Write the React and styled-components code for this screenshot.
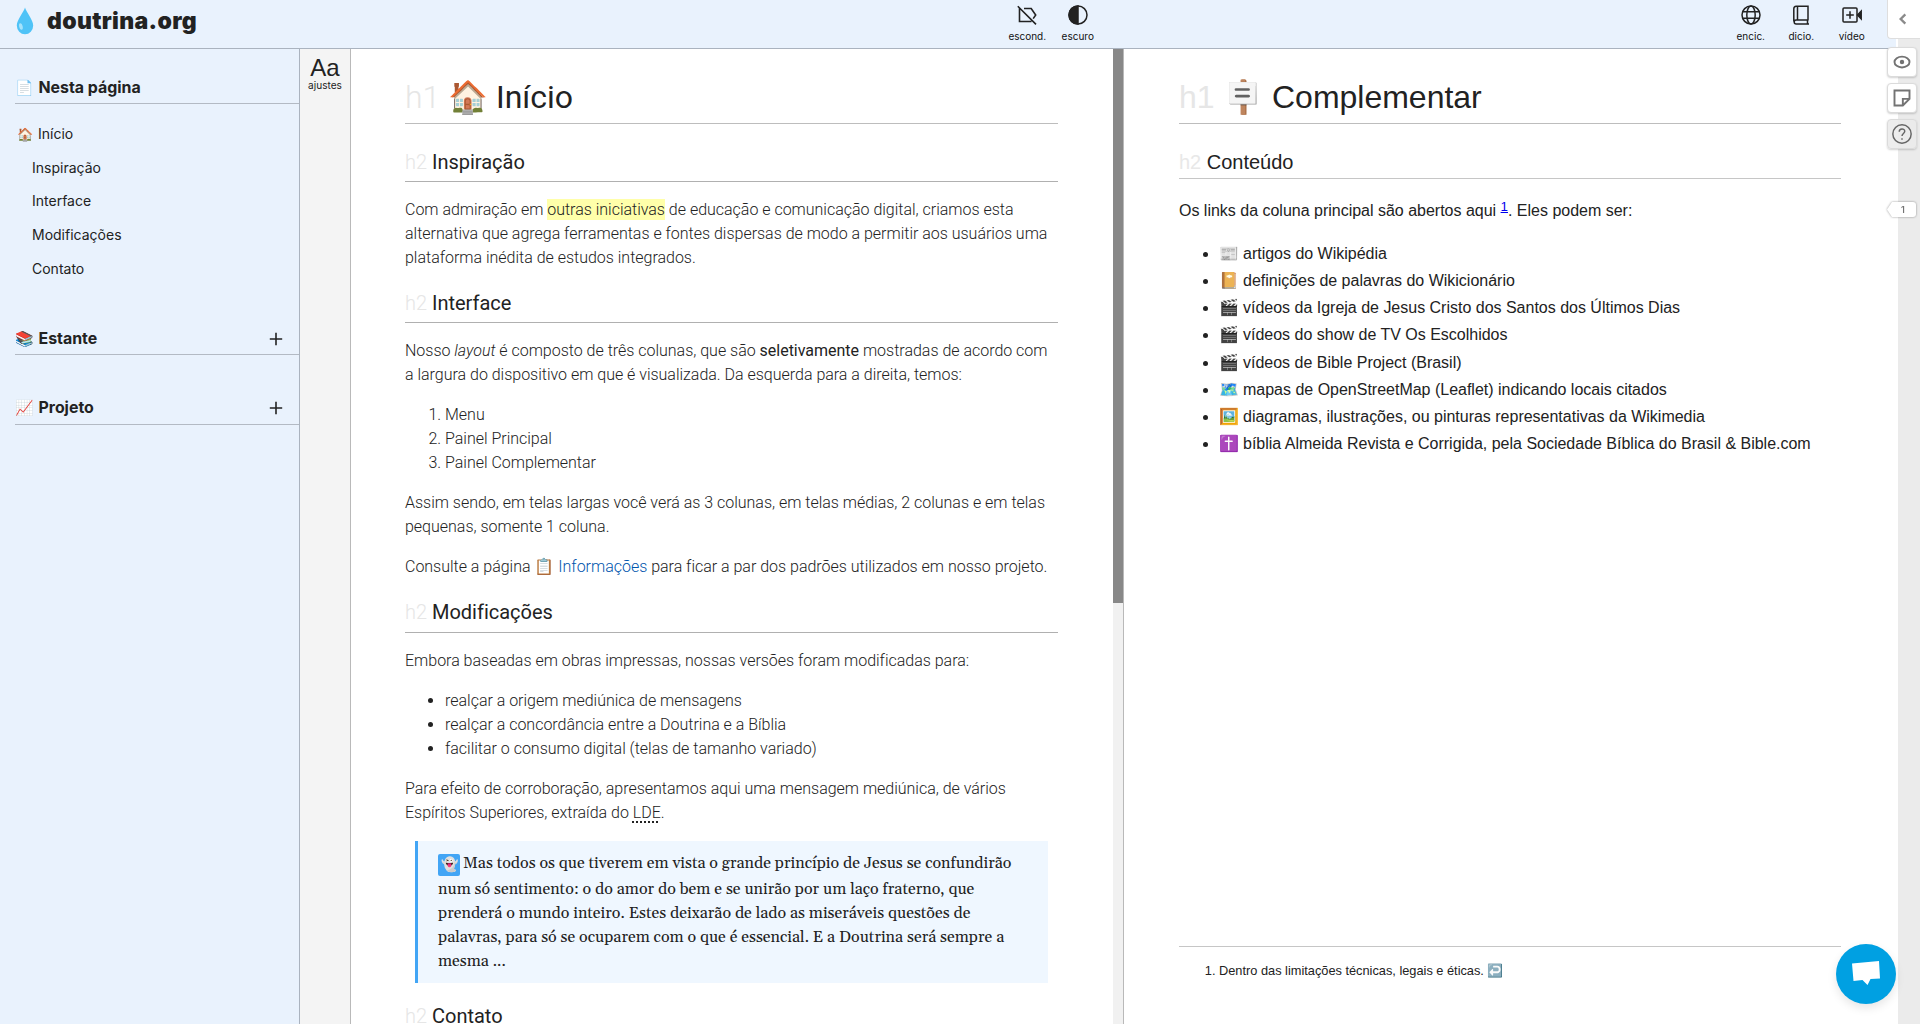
import React from "react";
import styled, { createGlobalStyle } from "styled-components";

const Global = createGlobalStyle`
  * { box-sizing: border-box; }
  html, body { margin: 0; height: 100%; overflow: hidden; background: #fff; }
  body { font-family: Inter, sans-serif; color: #222; }
  a { color: inherit; text-decoration: none; }
`;

const Page = styled.div`
  position: relative;
  display: flex;
  flex-direction: column;
  width: 1920px;
  height: 1024px;
  overflow: hidden;
`;
const Header = styled.header`
  display: flex;
  flex: none;
  width: 1896px;
  height: 49px;
  background: #e9f2fd;
  border-bottom: 1px solid #aab3bf;
`;
const Brand = styled.div`
  display: flex;
  align-items: flex-start;
  width: 1002px;
  padding: 7px 0 0 16px;
`;
const BrandName = styled.span`
  margin: -1px 0 0 13px;
  font: 900 23px/31px Inter, sans-serif;
  letter-spacing: 0.35px;
`;
const ToolGroup = styled.nav`
  display: flex;
  margin-left: ${(p) => p.$offset || 0}px;
`;
const Tool = styled.button`
  display: flex;
  flex-direction: column;
  align-items: center;
  width: 50.5px;
  padding: 3px 0 0;
  border: 0;
  background: none;
  color: #111;
  font: 400 10px/14px Inter, sans-serif;
  svg { width: 24px; height: 24px; margin-bottom: 1.5px; }
`;
const Body = styled.div`
  display: flex;
  flex: 1;
  min-height: 0;
`;
const Sidebar = styled.aside`
  width: 300px;
  padding-left: 15px;
  background: #e9f2fd;
  border-right: 1px solid #aab3bf;
`;
const SideTitle = styled.h2`
  display: flex;
  align-items: center;
  height: ${(p) => p.$height}px;
  margin: ${(p) => p.$top}px 0 0;
  padding: ${(p) => p.$drop || 0}px 16px 0 0;
  border-bottom: 1px solid #b3bac4;
  font: 700 15.9px/20px Inter, sans-serif;
  span { width: 23.5px; font-weight: 400; font-size: 15px; }
  svg { margin-left: auto; }
`;
const SideLinks = styled.nav`
  display: flex;
  flex-direction: column;
  padding: 13.5px 0 0 17px;
  height: 198px;
`;
const SideLink = styled.a`
  display: flex;
  align-items: center;
  height: 33.6px;
  margin-left: ${(p) => (p.$top ? -15 : 0)}px;
  font: 400 14px/18px Inter, sans-serif;
  span { width: 21px; font-size: 13px; }
`;
const Rail = styled.div`
  width: 51px;
  padding-top: 3px;
  background: #f4f4f4;
  border-right: 1px solid #b9b9b9;
  text-align: center;
  font: 400 10.1px/12px Inter, sans-serif;
  strong { display: block; margin-bottom: -4px; font: 400 24px/31px "Liberation Sans", sans-serif; }
`;
const MainPane = styled.main`
  width: 762px;
  padding: 16px 55px 0 54px;
  overflow: hidden;
  font: 300 16px/24px Roboto, sans-serif;
  letter-spacing: -0.012px;
`;
const ScrollTrack = styled.div`
  width: 11px;
  background: #f1f1f1;
  border-right: 1px solid #b9b9b9;
`;
const ScrollThumb = styled.div`
  height: 554px;
  background: #888;
`;
const H1 = styled.h1`
  display: flex;
  align-items: center;
  height: 59px;
  margin: 0;
  padding-top: 5px;
  border-bottom: 1px solid #bdbdbd;
  font-size: 32px;
  font-weight: 400;
  small { width: ${(p) => p.$tag}px; font-size: 32px; font-weight: 300; color: #e6e6e6; }
  span { width: ${(p) => p.$icon}px; font-size: 32px; }
`;
const H2 = styled.h2`
  height: 37.4px;
  margin: ${(p) => p.$top ?? 16}px 0 16px;
  padding-top: 5px;
  border-bottom: 1px solid #b0b0b0;
  font-size: 20px;
  font-weight: 400;
  line-height: 24px;
  small { font-size: 20px; font-weight: 300; color: #e6e6e6; }
`;
const P = styled.p`
  margin: ${(p) => p.$top || 0}px 0 16px;
  white-space: nowrap;
`;
const Mark = styled.mark`
  padding: 1px 0;
  background: #ffffaa;
  color: inherit;
`;
const Ordered = styled.ol`
  margin: 0 0 16px;
  padding-left: 40px;
`;
const Bulleted = styled.ul`
  margin: 0 0 16px;
  padding-left: 40px;
`;
const Link = styled.a`
  && { color: #0055ad; }
`;
const Abbr = styled.abbr`
  text-decoration: underline dotted #222 1.5px;
  text-underline-offset: 4px;
  text-decoration-skip-ink: none;
`;
const Quote = styled.blockquote`
  height: 142px;
  margin: 0 10px 16px;
  padding: 10px 0 0 20px;
  background: #eff7ff;
  border-left: 3px solid #42a5f5;
  font: 400 16px/24px Gelasio, Georgia, "Liberation Serif", serif;
  letter-spacing: 0;
`;
const QuoteLine = styled.span`
  display: block;
  height: ${(p) => p.$h || 24}px;
  white-space: nowrap;
`;
const Ghost = styled.span`
  display: inline-flex;
  align-items: center;
  justify-content: center;
  width: 22px;
  height: 22px;
  margin-right: 3px;
  vertical-align: -1px;
  border-radius: 2px;
  background: #42a5f5;
  font-size: 14px;
  line-height: 22px;
`;
const SidePane = styled.section`
  display: flex;
  flex-direction: column;
  width: 774px;
  padding: 16px 57px 0 55px;
  font: 400 16px/24px "Liberation Sans", Arial, sans-serif;
  letter-spacing: -0.008px;
`;
const SideH2 = styled(H2)`
  height: 34px;
  margin-top: 21px;
  border-color: #c6c6c6;
  small { color: #e8e8e8; }
`;
const Note = styled.sup`
  font-size: 13.3px;
  line-height: 0;
  vertical-align: 5px;
  color: #0000ee;
  text-decoration: underline;
`;
const Sources = styled.ul`
  margin: 0;
  padding: 1px 0 0 40px;
  line-height: 27.15px;
  li span { display: inline-block; width: 24px; }
`;
const Footnotes = styled.ol`
  margin: auto 0 0;
  height: 78px;
  padding: 12px 0 0 40px;
  border-top: 1px solid #c6c6c6;
  font-size: 12.8px;
`;
const AnnotationStrip = styled.div`
  position: absolute;
  top: 0;
  right: 0;
  width: 22px;
  height: 100%;
  background: #ebebeb;
`;
const AnnotationBar = styled.div`
  position: absolute;
  top: 0;
  right: 0;
  display: flex;
  flex-direction: column;
  align-items: flex-start;
  width: 33px;
`;
const Toggle = styled.button`
  display: grid;
  place-items: center;
  width: 33px;
  height: 39px;
  margin-bottom: 8px;
  padding: 0 3px 0 0;
  border: 1px solid #dedede;
  border-width: 0 0 1px 1px;
  border-radius: 0 0 0 4px;
  background: #fff;
`;
const SquareButton = styled.button`
  display: grid;
  place-items: center;
  width: 30px;
  height: 30px;
  margin-bottom: ${(p) => p.$gap || 6}px;
  padding: 0;
  border: 1px solid #dbdbdb;
  border-radius: 4px;
  background: ${(p) => (p.$gray ? "rgba(235,235,235,.9)" : "#fff")};
  box-shadow: 0 1px 2px rgba(0,0,0,.18);
`;
const Bucket = styled.button`
  display: block;
  width: 29px;
  height: 15px;
  padding: 0;
  border: 0;
  background: none;
  filter: drop-shadow(0 0 1px rgba(0,0,0,.4));
  span {
    display: block;
    height: 15px;
    padding-left: 3px;
    border-radius: 3px;
    background: #fff;
    clip-path: polygon(5px 0, 100% 0, 100% 100%, 5px 100%, 0 50%);
    font: 600 9px/15px Inter, sans-serif;
    color: #737373;
    text-align: center;
  }
`;
const Chat = styled.button`
  position: absolute;
  right: 24px;
  bottom: 20px;
  display: grid;
  place-items: center;
  width: 60px;
  height: 60px;
  padding: 0;
  border: 0;
  border-radius: 50%;
  background: #00a0e2;
  box-shadow: 0 4px 10px rgba(0,0,0,.1);
`;

const Plus = () => (
  <svg width="14" height="14" viewBox="0 0 14 14" stroke="#222" strokeWidth="1.6"><path d="M7 .8v12.4M.8 7h12.4" /></svg>
);
const Line = ({ children, size = 24, color = "#222", width = 1.8 }) => (
  <svg width={size} height={size} viewBox="0 0 24 24" fill="none" stroke={color} strokeWidth={width}>{children}</svg>
);

const sources = [
  ["📰", "artigos do Wikipédia"],
  ["📔", "definições de palavras do Wikicionário"],
  ["🎬", "vídeos da Igreja de Jesus Cristo dos Santos dos Últimos Dias"],
  ["🎬", "vídeos do show de TV Os Escolhidos"],
  ["🎬", "vídeos de Bible Project (Brasil)"],
  ["🗺️", "mapas de OpenStreetMap (Leaflet) indicando locais citados"],
  ["🖼️", "diagramas, ilustrações, ou pinturas representativas da Wikimedia"],
  ["✝️", "bíblia Almeida Revista e Corrigida, pela Sociedade Bíblica do Brasil & Bible.com"],
];

export default function App() {
  return (
    <Page>
      <Global />
      <Header>
        <Brand>
          <svg width="18" height="28" viewBox="0 0 18 28">
            <path d="M9 .6C8 4.800.8 13 .8 18.600a8.200 8.600 0 0 0 16.400 0C17.200 13 10 4.800 9 .6Z" fill="#4fc3f7" />
            <ellipse cx="4.900" cy="19.500" rx="1.800" ry="3.400" fill="#a4e2fb" transform="rotate(-12 4.900 19.500)" />
          </svg>
          <BrandName>doutrina.org</BrandName>
        </Brand>
        <ToolGroup>
          <Tool>
            <Line width={1.6}><path d="M2.800 3.200 21 21.400M4.500 5v13.500h12M9 5.500h7.200l4.500 6.500-2.500 3.600" /></Line>
            escond.
          </Tool>
          <Tool>
            <Line width={1.5}><circle cx="12" cy="12" r="9" /><path d="M12 3a9 9 0 0 0 0 18Z" fill="#222" /></Line>
            escuro
          </Tool>
        </ToolGroup>
        <ToolGroup $offset={622.5}>
          <Tool>
            <Line width={1.5}><circle cx="12" cy="12" r="9" /><ellipse cx="12" cy="12" rx="4.200" ry="9" /><path d="M4 8.700h16M4 15.300h16" /></Line>
            encic.
          </Tool>
          <Tool>
            <Line width={1.5}><path d="M19 17.500V3.200H7.200A2.500 2.500 0 0 0 4.800 5.700v12.800M19 17H7.200a2 2 0 0 0 0 4H20M8.500 3.500V17M18.500 17v4" /></Line>
            dicio.
          </Tool>
          <Tool>
            <Line width={1.5}><rect x="3" y="5" width="14" height="14" rx="1" /><path d="M10 8.200v7.600M6.200 12h7.600" /><path d="m17.500 12 3.700-3.800v7.600Z" fill="#222" /></Line>
            vídeo
          </Tool>
        </ToolGroup>
      </Header>
      <Body>
        <Sidebar>
          <SideTitle $top={23} $height={32}><span>📄</span>Nesta página</SideTitle>
          <SideLinks>
            <SideLink $top><span>🏠</span>Início</SideLink>
            <SideLink>Inspiração</SideLink>
            <SideLink>Interface</SideLink>
            <SideLink>Modificações</SideLink>
            <SideLink>Contato</SideLink>
          </SideLinks>
          <SideTitle $top={21} $height={32} $drop={1}><span>📚</span>Estante<Plus /></SideTitle>
          <SideTitle $top={36} $height={34}><span>📈</span>Projeto<Plus /></SideTitle>
        </Sidebar>
        <Rail><strong>Aa</strong>ajustes</Rail>
        <MainPane>
          <H1 $tag={43} $icon={48}><small>h1</small><span>🏠</span>Início</H1>
          <H2 $top={20.6}><small>h2</small> Inspiração</H2>
          <P>
            Com admiração em <Mark>outras iniciativas</Mark> de educação e comunicação digital, criamos esta<br />
            alternativa que agrega ferramentas e fontes dispersas de modo a permitir aos usuários uma<br />
            plataforma inédita de estudos integrados.
          </P>
          <H2><small>h2</small> Interface</H2>
          <P>
            Nosso <em>layout</em> é composto de três colunas, que são <b>seletivamente</b> mostradas de acordo com<br />
            a largura do dispositivo em que é visualizada. Da esquerda para a direita, temos:
          </P>
          <Ordered><li>Menu</li><li>Painel Principal</li><li>Painel Complementar</li></Ordered>
          <P>
            Assim sendo, em telas largas você verá as 3 colunas, em telas médias, 2 colunas e em telas<br />
            pequenas, somente 1 coluna.
          </P>
          <P>Consulte a página 📋 <Link>Informações</Link> para ficar a par dos padrões utilizados em nosso projeto.</P>
          <H2><small>h2</small> Modificações</H2>
          <P>Embora baseadas em obras impressas, nossas versões foram modificadas para:</P>
          <Bulleted>
            <li>realçar a origem mediúnica de mensagens</li>
            <li>realçar a concordância entre a Doutrina e a Bíblia</li>
            <li>facilitar o consumo digital (telas de tamanho variado)</li>
          </Bulleted>
          <P>
            Para efeito de corroboração, apresentamos aqui uma mensagem mediúnica, de vários<br />
            Espíritos Superiores, extraída do <Abbr>LDE</Abbr>.
          </P>
          <Quote>
            <QuoteLine $h={26}><Ghost>👻</Ghost>Mas todos os que tiverem em vista o grande princípio de Jesus se confundirão</QuoteLine>
            <QuoteLine>num só sentimento: o do amor do bem e se unirão por um laço fraterno, que</QuoteLine>
            <QuoteLine>prenderá o mundo inteiro. Estes deixarão de lado as miseráveis questões de</QuoteLine>
            <QuoteLine>palavras, para só se ocuparem com o que é essencial. E a Doutrina será sempre a</QuoteLine>
            <QuoteLine>mesma ...</QuoteLine>
          </Quote>
          <H2><small>h2</small> Contato</H2>
        </MainPane>
        <ScrollTrack><ScrollThumb /></ScrollTrack>
        <SidePane>
          <H1 $tag={44} $icon={49}><small>h1</small><span>🪧</span>Complementar</H1>
          <SideH2><small>h2</small> Conteúdo</SideH2>
          <P $top={4}>Os links da coluna principal são abertos aqui <Note>1</Note>. Eles podem ser:</P>
          <Sources>
            {sources.map(([icon, text]) => <li key={text}><span>{icon}</span>{text}</li>)}
          </Sources>
          <Footnotes><li>Dentro das limitações técnicas, legais e éticas. ↩️</li></Footnotes>
        </SidePane>
      </Body>
      <AnnotationStrip />
      <AnnotationBar>
        <Toggle><Line size={14} color="#8a8a8a" width={4}><path d="m16 4-8 8 8 8" /></Line></Toggle>
        <SquareButton><Line size={20} color="#737373" width={2.3}><ellipse cx="12" cy="12" rx="9" ry="6.500" /><circle cx="12" cy="12" r="1.500" fill="#737373" /></Line></SquareButton>
        <SquareButton><Line size={20} color="#737373" width={2.3}><path d="M3 3h18v10l-8 8H3ZM21 13h-8v8" /></Line></SquareButton>
        <SquareButton $gray $gap={53}><Line size={22} color="#666" width={1.600}><circle cx="12" cy="12" r="10" /><path d="M9 9.500c0-4 6-4 6-.4 0 2.200-3 2.500-3 5.200M12 16.500v1.800" /></Line></SquareButton>
        <Bucket><span>1</span></Bucket>
      </AnnotationBar>
      <Chat>
        <svg width="30" height="30" viewBox="0 0 30 30" fill="#fff"><path d="M1 4.500 28 2l1 17.500-9.500.5-3 6-5-5L2.500 22Z" /></svg>
      </Chat>
    </Page>
  );
}
